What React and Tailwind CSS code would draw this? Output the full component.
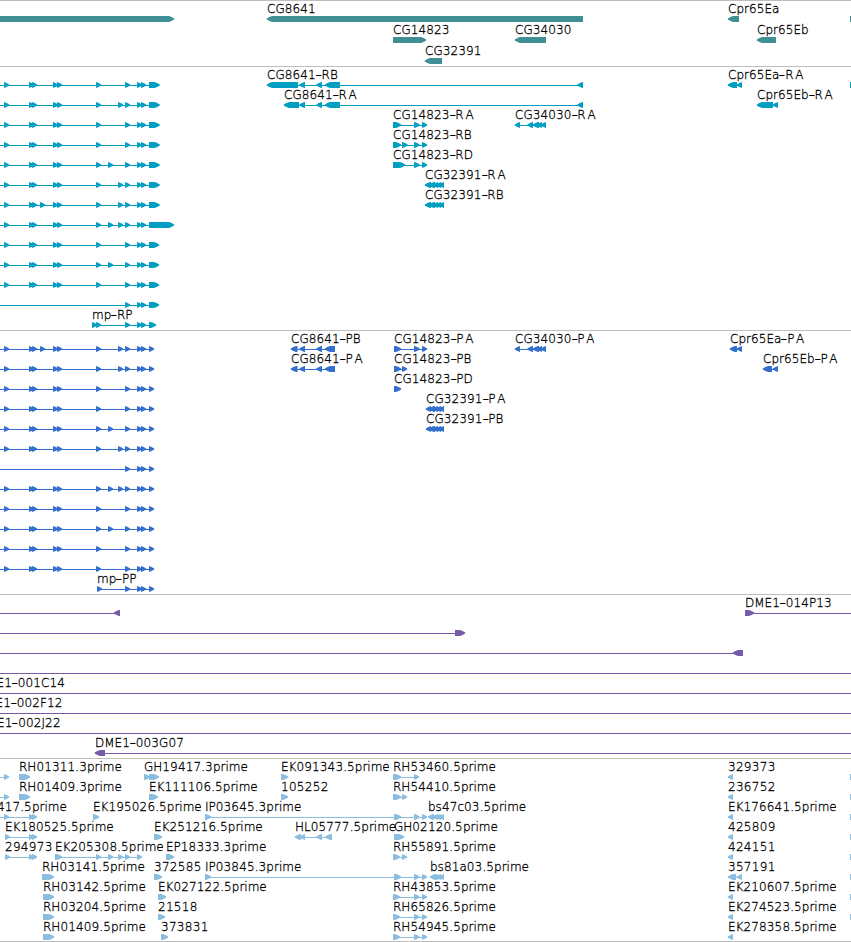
import React from 'react';

// A feature is [label, labelX, direction, parts, lineStart?, lineEnd?]
// and every part is [start, end] on the horizontal axis.
const R = 'right';
const L = 'left';

const EXONS = [[4, 9], [29, 34], [32, 37], [53, 58], [57, 62], [96, 101], [125, 130], [137, 142], [141, 146]];
const EXTRA = { 40: [40, 45], 108: [108, 113], 118: [118, 123] };

const mp = (end, ...extra) => ['', 0, R, [...EXONS, ...extra.map((x) => EXTRA[x]), [149, end]], 0];
const mpShort = (end) => ['', 0, R, [[125, 130], [137, 142], [141, 146], [149, end]], 0];
const edge = ['', 0, R, [[850, 870]]];

const CG34030_PARTS = [[515, 520], [527.5, 533], [533, 539], [537, 542], [541, 546]];
const CG32391_PARTS = [[425, 431], [429, 435], [433, 438], [436, 441], [439, 444]];
const IP_PARTS = [[205, 211], [394, 401], [414, 419.5], [422, 427]];

const est = (label, x, ...parts) => [label, x, R, parts];
const estLeft = (label) => [label, 728, L, [[728, 733]]];

const genes = [
  [['', 0, R, [[-10, 174]]], ['CG8641', 267, L, [[267, 583]]], ['Cpr65Ea', 728, L, [[728, 739]]], edge],
  [['CG14823', 393, R, [[393, 426]]], ['CG34030', 515, L, [[515, 546]]], ['Cpr65Eb', 757, L, [[757, 776]]]],
  [['CG32391', 425, L, [[425, 442]]]],
];

const transcripts = [
  [
    mp(159.6),
    ['CG8641-RB', 267, L, [[267, 298], [299.5, 305], [316.5, 322], [325, 340], [577.5, 583]]],
    ['Cpr65Ea-RA', 728, L, [[728, 737], [737, 742]]],
    edge,
  ],
  [
    mp(159.6, 118),
    ['CG8641-RA', 284, L, [[284, 299], [299.5, 305], [316.5, 322], [325, 340], [577.5, 583]]],
    ['Cpr65Eb-RA', 757, L, [[757, 773], [773, 778]]],
  ],
  [
    mp(159.6),
    ['CG14823-RA', 393, R, [[393, 401], [414, 419.5], [422, 427]]],
    ['CG34030-RA', 515, L, CG34030_PARTS],
  ],
  [mp(159.6), ['CG14823-RB', 393, R, [[393, 401], [402, 407.5], [414, 419.5], [422, 427]]]],
  [mp(159.6, 108), ['CG14823-RD', 393, R, [[393, 405], [414, 419.5], [422, 427]]]],
  [mp(159.6, 118), ['CG32391-RA', 425, L, CG32391_PARTS]],
  [mp(159.6, 40, 118), ['CG32391-RB', 425, L, CG32391_PARTS]],
  [mp(174, 108, 118)],
  [mp(159)],
  [mp(159, 108)],
  [mp(159)],
  [mpShort(159)],
  [['mp-RP', 92, R, [[92, 97], [96, 101], [125, 130], [137, 142], [141, 146], [149, 156]]]],
];

const CG8641_CDS = [[291, 297.5], [299.5, 305], [316.5, 322], [325, 335]];
const CG32391_CDS = [[426, 431], [429, 435], [433, 438], [436, 441], [439, 444]];

const proteins = [
  [
    mp(154, 40, 118),
    ['CG8641-PB', 291, L, CG8641_CDS],
    ['CG14823-PA', 394, R, [[394, 401], [414, 419.5], [422, 427]]],
    ['CG34030-PA', 515, L, CG34030_PARTS],
    ['Cpr65Ea-PA', 730, L, [[730, 737], [737, 742]]],
  ],
  [
    mp(154, 118),
    ['CG8641-PA', 291, L, CG8641_CDS],
    ['CG14823-PB', 394, R, [[394, 401], [402, 407]]],
    ['Cpr65Eb-PA', 763, L, [[763, 772], [773, 778]]],
  ],
  [mp(154), ['CG14823-PD', 394, R, [[394, 401]]]],
  [mp(154), ['CG32391-PA', 426, L, CG32391_CDS]],
  [mp(154, 108), ['CG32391-PB', 426, L, CG32391_CDS]],
  [mp(154, 118)],
  [mpShort(154)],
  [mp(154, 108, 118)],
  [mp(154)],
  [mp(154, 108)],
  [mp(154)],
  [mp(154)],
  [['mp-PP', 97, R, [[97, 102], [125, 130], [137, 142], [141, 146], [149, 154]]]],
];

const clones = [
  [['', 0, L, [[114, 120]], 0], ['DME1-014P13', 745, R, [[745, 754]], 745, 851]],
  [['', 0, R, [[455, 465]], 0]],
  [['', 0, L, [[733, 743]], 0]],
  [['', 0, R, [], 0, 851]],
  [['DME1-001C14', -23, R, [], 0, 851]],
  [['DME1-002F12', -24, R, [], 0, 851]],
  [['DME1-002J22', -22.5, R, [], 0, 851]],
  [['DME1-003G07', 95, L, [[95, 105]], 95, 851]],
];

const ests = [
  [
    ['', 0, R, [[4, 9]], 0],
    est('RH01311.3prime', 19, [19, 30]),
    est('GH19417.3prime', 144, [144, 150], [149, 159]),
    est('EK091343.5prime', 281, [281, 288]),
    est('RH53460.5prime', 393, [393, 401], [414, 419]),
    estLeft('329373'),
    edge,
  ],
  [
    ['', 0, R, [[4, 9]], 0],
    est('RH01409.3prime', 19, [19, 30]),
    est('EK111106.5prime', 149, [149, 158]),
    est('105252', 281, [281, 288]),
    est('RH54410.5prime', 393, [393, 401], [402, 407]),
    estLeft('236752'),
    edge,
  ],
  [
    ['GH19417.5prime', -37, R, [[4, 9], [29, 34], [32, 37]], 0],
    est('EK195026.5prime', 93, [93, 99]),
    est('IP03645.3prime', 205, ...IP_PARTS),
    ['bs47c03.5prime', 428, L, [[428, 434], [433, 438], [436, 441], [439, 444]]],
    estLeft('EK176641.5prime'),
    edge,
  ],
  [
    est('EK180525.5prime', 5, [5, 10], [29, 34], [32, 37]),
    est('EK251216.5prime', 154, [154, 162]),
    ['HL05777.5prime', 295, L, [[295, 301], [300, 305], [316.5, 322], [325.5, 332]]],
    est('GH02120.5prime', 394, [394, 404]),
    estLeft('425809'),
    edge,
  ],
  [
    est('294973', 5, [5, 10], [29, 34], [32, 37]),
    est('EK205308.5prime', 55, [55, 62], [96, 101], [108, 113], [118, 123], [125, 130], [137, 142]),
    est('EP18333.3prime', 166, [166, 174]),
    est('RH55891.5prime', 393, [393, 400], [402, 407]),
    estLeft('424151'),
    edge,
  ],
  [
    est('RH03141.5prime', 42, [42, 54]),
    est('372585', 154, [154, 162]),
    est('IP03845.3prime', 205, ...IP_PARTS),
    ['bs81a03.5prime', 430, L, [[430, 436], [433, 438], [436, 441], [439, 444]]],
    ['357191', 728, L, [[728, 736], [737, 742]]],
    edge,
  ],
  [
    est('RH03142.5prime', 43, [43, 54]),
    est('EK027122.5prime', 158, [158, 166]),
    est('RH43853.5prime', 393, [393, 400], [414, 419.5], [422, 427]),
    estLeft('EK210607.5prime'),
    edge,
  ],
  [
    est('RH03204.5prime', 43, [43, 54]),
    est('21518', 158, [158, 165]),
    est('RH65826.5prime', 393, [393, 400], [414, 419.5], [422, 427]),
    estLeft('EK274523.5prime'),
    edge,
  ],
  [
    est('RH01409.5prime', 43, [43, 54]),
    est('373831', 161, [161, 168]),
    est('RH54945.5prime', 393, [393, 400], [414, 419.5], [422, 427]),
    estLeft('EK278358.5prime'),
  ],
];

// Block with a slightly convex arrow head on the strand side
const arrow = (dir, start, end) => {
  const head = Math.min(5, end - start);
  if (dir === R) {
    const neck = end - head;
    return `M${start} 0H${neck}L${neck + 2.6} 1L${end + 0.2} 2.5V3.5L${neck + 2.6} 5L${neck} 6H${start}Z`;
  }
  const neck = start + head;
  return `M${end} 0H${neck}L${neck - 2.6} 1L${start - 0.2} 2.5V3.5L${neck - 2.6} 5L${neck} 6H${end}Z`;
};

const Label = ({ text, x }) => (
  <span className="absolute top-0 whitespace-pre leading-[16px]" style={{ left: x }}>
    {text.split(/(\d+|-)/).map((piece, i) => {
      if (piece === '-') return <span key={i} className="inline-block scale-x-150 px-[0.7px]">-</span>;
      if (piece === text) return <span key={i} className="tracking-[0.3px]">{piece}</span>;
      if (/^\d/.test(piece)) return <span key={i} className="tracking-[0.15px]">{piece}</span>;
      if (piece === 'RA' || piece === 'PA') return <span key={i} className="tracking-[1.7px]">{piece}</span>;
      return piece;
    })}
  </span>
);

const Feature = ({ dir, parts, from, to }) => {
  const start = from ?? Math.min(...parts.map((p) => p[0]));
  const end = to ?? Math.max(...parts.map((p) => p[1])) - 1;
  return (
    <g>
      <rect x={start} y="3" width={Math.max(end - start, 0)} height="1" shapeRendering="crispEdges" />
      {parts.map(([a, b], i) => (
        <path key={i} d={arrow(dir, a, b)} />
      ))}
    </g>
  );
};

const Track = ({ rows, className, rowClass = 'h-[20px]' }) => (
  <section className={`border-t border-[#bebebe] ${className}`}>
    {rows.map((features, i) => (
      <div key={i} className={`relative flex flex-col overflow-x-clip ${rowClass}`}>
        <svg className="mt-[15px] h-[6px] w-full shrink-0 fill-current">
          {features.map(([, , dir, parts, from, to], j) => (
            <Feature key={j} dir={dir} parts={parts} from={from} to={to} />
          ))}
        </svg>
        <div className="text-black [-webkit-text-stroke:0.3px_black]">
          {features.filter((f) => f[0]).map(([text, x]) => (
            <Label key={text} text={text} x={x} />
          ))}
        </div>
      </div>
    ))}
  </section>
);

const App = () => {
  return (
    <main className="h-[942px] w-[851px] overflow-hidden bg-white font-['DejaVu_Sans_Light','DejaVu_Sans',sans-serif] text-[12px] [font-kerning:none]">
      <Track rows={genes} rowClass="h-[21px]" className="pb-[2px] text-[#3f8f95]" />
      <Track rows={transcripts} className="pb-[3px] text-[#009fc1]" />
      <Track rows={proteins} className="pb-[3px] text-[#346fce]" />
      <Track rows={clones} className="pb-[3px] text-[#775aa9]" />
      <Track rows={ests} className="border-b border-b-[#bebebe] pb-[2px] text-[#8abddf]" />
    </main>
  );
};

export default App;
